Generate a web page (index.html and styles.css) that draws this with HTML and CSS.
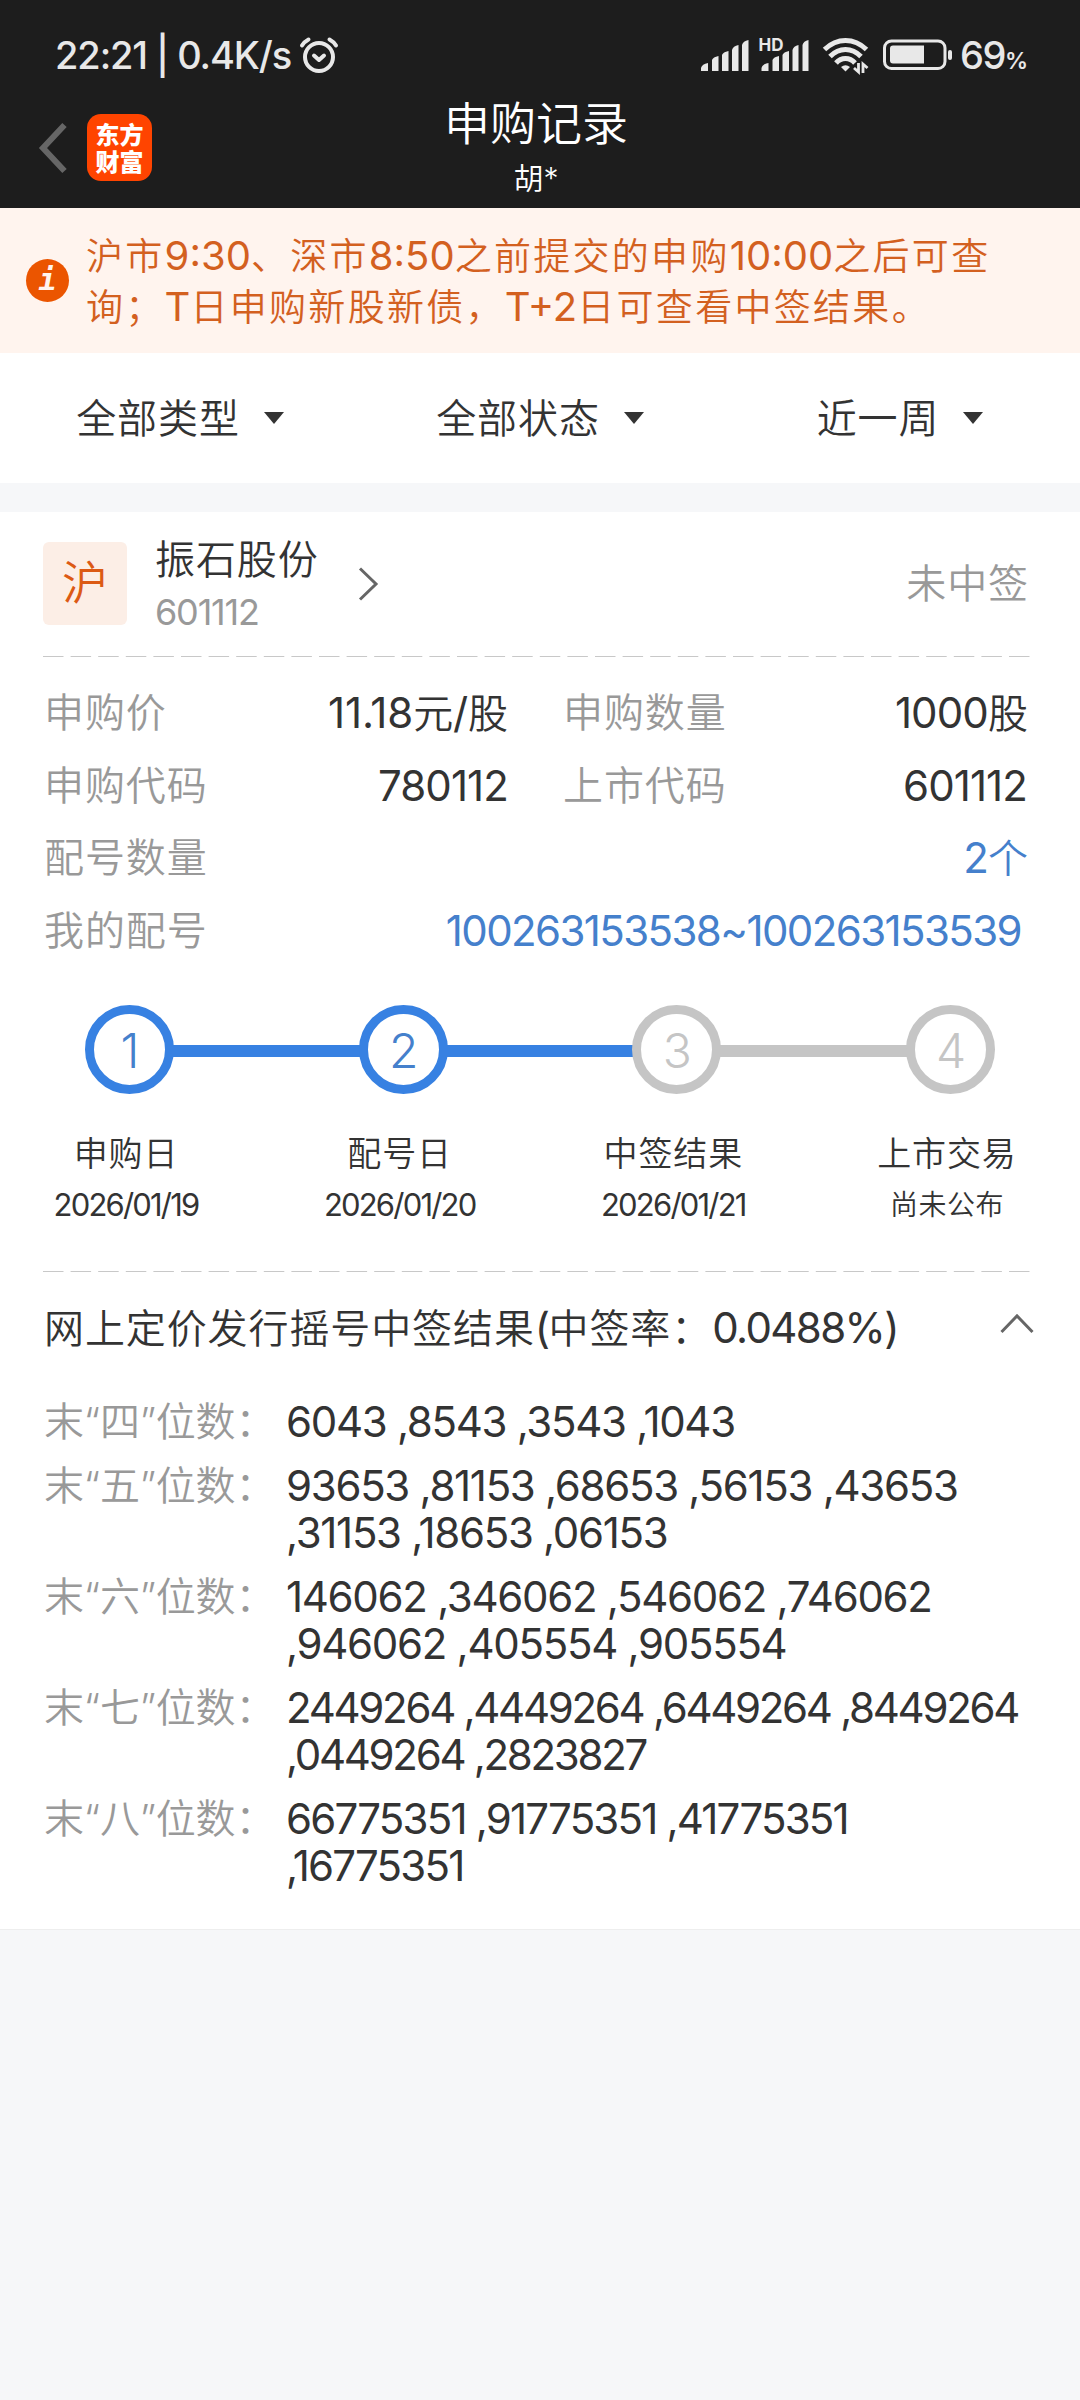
FILE: index.html
```html
<!DOCTYPE html>
<html lang="zh-CN">
<head>
    <meta charset="UTF-8">
    <meta name="viewport" content="width=device-width, initial-scale=1.0">
    <title>申购记录</title>
    <link rel="stylesheet" href="styles.css">
</head>
<body>
    <div class="header">
        <div class="status">
            <span class="time">22:21 | 0.4K/s</span>
            <svg class="alarm" width="40" height="38" viewBox="0 0 40 38" fill="none" stroke="#e8e8e8" stroke-linecap="round" stroke-linejoin="round">
                <circle cx="20" cy="21" r="14" stroke-width="4"/>
                <path d="M15 19.500l5 4.500 5-4.500" stroke-width="4"/>
                <path d="M3 9.500Q5 6 9.500 3.500M37 9.500Q35 6 30.500 3.500" stroke-width="4"/>
            </svg>
            <svg class="signal" width="110" height="34" viewBox="0 0 110 34" fill="#e8e8e8">
                <path d="M0 33v-3q1-4 7-5v8zM11 33V22q1-3 6.500-4v15zM21 33V17q1-3 6.500-4v20zM31 33V12q1-4 6.500-5v26zM41 33V7q1-4 6.500-5v31z"/>
                <path d="M60.500 33v-3q1-4 7-5v8zM71.500 33V22q1-3 6.500-4v15zM81.500 33V17q1-3 6.500-4v20zM91.500 33V12q1-4 6-5v26zM101.500 33V7q1-4 6-5v31z"/>
                <text x="57.500" y="13" class="hd">HD</text>
            </svg>
            <svg class="wifi" width="48" height="38" viewBox="0 0 48 38" fill="none" stroke="#e8e8e8" stroke-width="5">
                <path d="M2.500 13.500Q12 4.500 23.500 4.500T44.500 13.500"/>
                <path d="M8 20.500Q15 13.500 23.500 13.500T39 20.500"/>
                <path d="M14 27Q18 22.500 23.500 22.500T33 27"/>
                <path d="M19 31q4.500-3.500 9 0l-4.500 4.500z" fill="#e8e8e8" stroke="none"/>
                <path d="M36.500 27v9l-4.500-4M41 37v-9l4.500 4" stroke-width="2.800"/>
            </svg>
            <svg class="battery" width="70" height="32" viewBox="0 0 70 32">
                <rect x="1.500" y="2" width="60.500" height="27.500" rx="7" fill="none" stroke="#e8e8e8" stroke-width="3"/>
                <path d="M10 6.500h31v18H10q-3 0-3-3v-12q0-3 3-3z" fill="#e8e8e8"/>
                <rect x="65" y="11" width="4" height="10" rx="2" fill="#e8e8e8"/>
            </svg>
            <span class="level">69<small>%</small></span>
        </div>
        <div class="nav">
            <div class="nav-left">
                <svg width="28" height="50" viewBox="0 0 28 50" fill="none" stroke="#666" stroke-width="6">
                    <path d="M25.500 2L4 25l21.500 23"/>
                </svg>
                <div class="logo">东方<br>财富</div>
            </div>
            <div class="title">
                <h1>申购记录</h1>
                <p>胡*</p>
            </div>
        </div>
    </div>

    <div class="notice">
        <span class="notice-icon">i</span>
        <p>沪市<b>9:30</b>、深市<b>8:50</b>之前提交的申购<b>10:00</b>之后可查<br>询；<b>T</b>日申购新股新债，<b>T+2</b>日可查看中签结果。</p>
    </div>

    <div class="filter">
        <a>全部类型<i></i></a>
        <a>全部状态<i></i></a>
        <a>近一周<i></i></a>
    </div>

    <div class="card">
        <div class="stock">
            <span class="market">沪</span>
            <div class="name">
                <h2>振石股份</h2>
                <p>601112</p>
            </div>
            <svg width="22" height="34" viewBox="0 0 22 34" fill="none" stroke="#666" stroke-width="3">
                <path d="M2 1.500L18 17 2 32.500"/>
            </svg>
            <span class="result">未中签</span>
        </div>
        <svg class="dash" width="988" height="1"><path d="M0 .5h988"/></svg>

        <div class="detail">
            <div class="row">
                <p>申购价<em class="price">11.18<u>元</u>/<u>股</u></em></p>
                <p>申购数量<em>1000<u>股</u></em></p>
            </div>
            <div class="row">
                <p>申购代码<em>780112</em></p>
                <p>上市代码<em>601112</em></p>
            </div>
            <div class="row">
                <p>配号数量<em class="blue">2<u>个</u></em></p>
            </div>
            <div class="row">
                <p>我的配号<em class="blue codes">100263153538~100263153539</em></p>
            </div>
        </div>

        <div class="steps">
            <span class="dot on">1</span><i class="on"></i>
            <span class="dot on">2</span><i class="on"></i>
            <span class="dot">3</span><i></i>
            <span class="dot">4</span>
        </div>
        <div class="dates">
            <div><h3>申购日</h3><p>2026/01/19</p></div>
            <div><h3>配号日</h3><p>2026/01/20</p></div>
            <div><h3>中签结果</h3><p>2026/01/21</p></div>
            <div><h3>上市交易</h3><p class="cn">尚未公布</p></div>
        </div>
        <svg class="dash" width="988" height="1"><path d="M0 .5h988"/></svg>

        <div class="lottery">
            <h2>网上定价发行摇号中签结果<b>(</b>中签率：<b>0.0488%)</b></h2>
            <svg width="34" height="22" viewBox="0 0 34 22" fill="none" stroke="#666" stroke-width="3">
                <path d="M1.500 19L17 3l15.500 16"/>
            </svg>
        </div>
        <dl class="list">
            <dt>末“四”位数：</dt>
            <dd>6043 ,8543 ,3543 ,1043</dd>
            <dt>末“五”位数：</dt>
            <dd>93653 ,81153 ,68653 ,56153 ,43653<br>,31153 ,18653 ,06153</dd>
            <dt>末“六”位数：</dt>
            <dd>146062 ,346062 ,546062 ,746062<br>,946062 ,405554 ,905554</dd>
            <dt>末“七”位数：</dt>
            <dd class="seven">2449264 ,4449264 ,6449264 ,8449264<br>,0449264 ,2823827</dd>
            <dt>末“八”位数：</dt>
            <dd class="eight">66775351 ,91775351 ,41775351<br>,16775351</dd>
        </dl>
    </div>
</body>
</html>
```
FILE: styles.css
```css
*{
    padding: 0;
    margin: 0;
    box-sizing: border-box;
}
body{
    width: 1080px;
    min-height: 2400px;
    background-color: #f6f7f9;
    font-family: Inter, "Noto Sans CJK SC", sans-serif;
    font-size: 40px;
    font-weight: 350;
    letter-spacing: 0.9px;
    color: #333;
    white-space: nowrap;
}
h1,h2,h3,b,em,i,u{
    font-weight: inherit;
    font-style: normal;
    text-decoration: none;
}
svg{
    display: block;
    flex: none;
    overflow: visible;
}

/* 顶部 */
.header{
    height: 208px;
    background-color: #1d1d1d;
    color: #fff;
}
.status{
    height: 96px;
    padding: 13px 54px 0 55px;
    display: flex;
    align-items: center;
    color: #e8e8e8;
}
.time{
    font-size: 38px;
    font-weight: 500;
    letter-spacing: -1.1px;
    width: 237px;
}
.alarm{
    margin-left: 7px;
}
.signal{
    margin-left: auto;
}
.hd{
    font-size: 17px;
    font-weight: 700;
    letter-spacing: 0;
}
.wifi{
    margin-left: 11px;
}
.battery{
    margin-left: 13px;
}
.level{
    width: 66px;
    margin-left: 7px;
    font-size: 38px;
    font-weight: 500;
    letter-spacing: -1.5px;
}
.level small{
    font-size: 23px;
    font-weight: 600;
}
.nav{
    height: 112px;
    display: grid;
    grid-template-columns: 1fr auto 1fr;
}
.nav-left{
    display: flex;
    padding: 18px 0 0 39px;
}
.nav-left svg{
    margin: 9px 20px 0 0;
}
.logo{
    width: 65px;
    height: 67px;
    padding-top: 6px;
    border-radius: 14px;
    background-color: #ff4400;
    font: 900 24px/27px "Noto Sans CJK SC", sans-serif;
    letter-spacing: 0;
    text-align: center;
}
.title{
    margin-top: -3px;
    text-align: center;
    padding-right: 8px;
}
.title h1{
    font-size: 46px;
    line-height: 60px;
    letter-spacing: 0;
}
.title p{
    font-size: 30px;
    line-height: 50px;
    letter-spacing: 0;
}

/* 提示 */
.notice{
    height: 145px;
    padding: 23px 0 0 26px;
    display: flex;
    background-color: #fff4ee;
    color: #d3601f;
}
.notice-icon{
    width: 43px;
    height: 43px;
    margin: 28px 17px 0 0;
    border-radius: 50%;
    background-color: #eb5500;
    color: #fff4ee;
    font: italic bold 30px/42px "DejaVu Sans Mono", monospace;
    letter-spacing: 0;
    text-align: center;
}
.notice p{
    font-size: 37px;
    line-height: 51px;
    letter-spacing: 2.3px;
}
.notice b{
    font-size: 40px;
    font-weight: 400;
    line-height: 1;
    letter-spacing: 0;
}

/* 筛选 */
.filter{
    height: 130px;
    padding-bottom: 4px;
    margin-bottom: 29px;
    display: flex;
    background-color: #fff;
}
.filter a{
    flex: 1;
    display: flex;
    justify-content: center;
    align-items: center;
}
.filter i{
    margin: 4px 0 0 24px;
    border: 10px solid transparent;
    border-top: 12px solid #333;
    border-bottom: 0;
}

.card{
    height: 1418px;
    background-color: #fff;
    border-bottom: 1px solid #eee;
}
.dash{
    margin-left: 43px;
    stroke: #c8c8c8;
    stroke-dasharray: 20.500 7.1;
}
.stock{
    height: 144px;
    padding: 30px 51px 0 43px;
    display: flex;
}
.market{
    width: 84px;
    height: 83px;
    border-radius: 6px;
    background-color: #fceee6;
    color: #dc5a14;
    font-size: 46px;
    line-height: 80px;
    letter-spacing: 0;
    text-align: center;
}
.name{
    width: 203px;
    margin: -12px 0 0 28px;
}
.name h2{
    font-size: 40px;
    line-height: 60px;
}
.name p{
    font-size: 36px;
    font-weight: 400;
    line-height: 44px;
    letter-spacing: -1.2px;
    color: #999;
}
.stock svg{
    margin-top: 25px;
}
.result{
    margin-left: auto;
    line-height: 83px;
    color: #999;
}

/* 申购信息 */
.detail{
    padding: 20px 53px 0 44px;
}
.row{
    height: 72.5px;
    line-height: 72px;
    display: flex;
    gap: 55px;
    color: #999;
}
.row p{
    flex: 1;
    display: flex;
    justify-content: space-between;
}
.row em{
    font-size: 42px;
    font-weight: 400;
    letter-spacing: -0.9px;
    color: #333;
}
.row u{
    font-size: 40px;
    font-weight: 350;
}
.row .price{
    letter-spacing: -0.1px;
}
.row .blue{
    color: #4580cc;
}
.row .codes{
    padding-right: 6px;
    letter-spacing: -1.6px;
}

/* 进度 */
.steps{
    padding: 38px 85px 0;
    display: flex;
    align-items: center;
}
.dot{
    width: 89px;
    height: 89px;
    border: 9px solid #c5c5c5;
    border-radius: 50%;
    font-size: 48px;
    font-weight: 300;
    line-height: 73px;
    letter-spacing: -1px;
    text-align: center;
    color: #c5c5c5;
}
.dot.on{
    border-color: #3781e2;
    color: #4580cc;
}
.steps i{
    flex: 1;
    height: 12px;
    margin: 3px -1px 0;
    background-color: #c5c5c5;
}
.steps i.on{
    background-color: #3781e2;
}
.dates{
    height: 177px;
    padding: 33px 43px 0 36px;
    display: flex;
    justify-content: space-between;
    text-align: center;
}
.dates div{
    width: 180px;
}
.dates h3{
    font-size: 34px;
    line-height: 54px;
}
.dates p{
    font-size: 31px;
    font-weight: 400;
    line-height: 48px;
    letter-spacing: -1.8px;
}
.dates .cn{
    font-size: 28px;
    font-weight: 350;
    letter-spacing: 0.5px;
}

/* 中签结果 */
.lottery{
    height: 126px;
    padding: 0 46px 0 44px;
    display: flex;
    justify-content: space-between;
}
.lottery h2{
    font-size: 40px;
    line-height: 112px;
}
.lottery b{
    font-size: 42px;
    font-weight: 400;
    letter-spacing: -1.6px;
}
.lottery svg{
    margin-top: 41px;
}
.list{
    padding-left: 44px;
    display: grid;
    grid-template-columns: 242px 1fr;
    row-gap: 17px;
    line-height: 47px;
}
.list dt{
    color: #999;
    letter-spacing: -0.2px;
}
.list dd{
    font-size: 42px;
    font-weight: 400;
    letter-spacing: -1.3px;
}
.list .seven{
    letter-spacing: -2.3px;
}
.list .eight{
    letter-spacing: -1.8px;
}
```
